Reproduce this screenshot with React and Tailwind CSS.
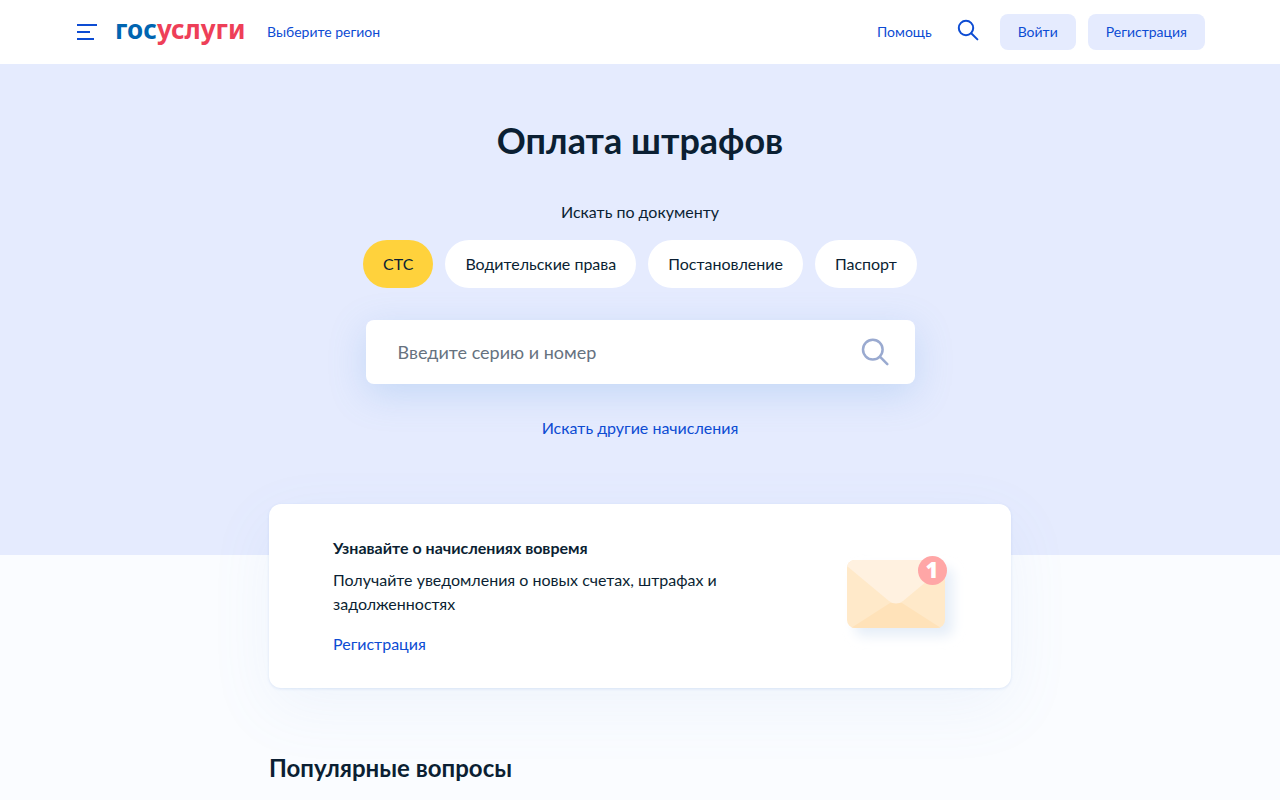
import React, { useState } from 'react'

const documents = [
  { id: 'sts', label: 'СТС' },
  { id: 'license', label: 'Водительские права' },
  { id: 'ruling', label: 'Постановление' },
  { id: 'passport', label: 'Паспорт' },
]

const MenuIcon = () => (
  <svg width="24" height="24" viewBox="0 0 24 24" aria-hidden="true">
    <path d="M2 5h20M2 12h13M2 19h17" stroke="#0d4cd3" strokeWidth="2" fill="none" />
  </svg>
)

const HeaderSearchIcon = () => (
  <svg width="24" height="28" viewBox="0 0 24 28" fill="none" aria-hidden="true">
    <circle cx="10" cy="10" r="7.2" stroke="#0d4cd3" strokeWidth="2" />
    <path d="M15.2 15.2l6.2 6.2" stroke="#0d4cd3" strokeWidth="2" strokeLinecap="round" />
  </svg>
)

const SearchIcon = () => (
  <svg width="28" height="28" viewBox="0 0 28 28" fill="none" aria-hidden="true">
    <circle cx="11.8" cy="11.6" r="9.8" stroke="#9aaad0" strokeWidth="2.5" />
    <path d="M18.9 18.7l7.4 7.4" stroke="#9aaad0" strokeWidth="2.5" strokeLinecap="round" />
  </svg>
)

const EnvelopeIcon = () => (
  <svg
    width="100"
    height="80"
    viewBox="0 0 100 80"
    className="shrink-0 overflow-visible"
    aria-hidden="true"
  >
    <defs>
      <clipPath id="envelope">
        <rect x="0" y="4" width="98" height="68" rx="8" />
      </clipPath>
      <filter id="envelope-shadow" x="-30%" y="-30%" width="160%" height="160%">
        <feGaussianBlur stdDeviation="6" />
      </filter>
    </defs>
    <rect x="8" y="12" width="98" height="68" rx="8" fill="#e6eef8" filter="url(#envelope-shadow)" />
    <g clipPath="url(#envelope)">
      <rect x="0" y="4" width="98" height="68" fill="#ffe9c9" />
      <path d="M4 72L43 47h12l39 25z" fill="#ffe2b9" />
      <path d="M0 4h98v6L56 45q-7 5-14 0L0 10z" fill="#fff1e0" />
    </g>
    <circle cx="85.500" cy="14.500" r="14.500" fill="#ffa6a6" />
    <text
      x="85"
      y="22"
      textAnchor="middle"
      fill="#fff"
      className="font-['Open_Sans'] text-[22px] font-extrabold"
    >
      1
    </text>
  </svg>
)

const Header = () => (
  <header className="bg-white">
    <div className="mx-auto flex h-16 max-w-[1130px] items-center justify-between text-sm text-[#0d4cd3]">
      <div className="flex items-center">
        <button type="button" aria-label="Меню">
          <MenuIcon />
        </button>
        <a
          href="#home"
          className="ml-4 w-32 pb-1.5 font-['Noto_Sans'] text-[26px] leading-8 font-bold text-[#0065b1]"
        >
          гос<span className="text-[#ee3f58]">услуги</span>
        </a>
        <a href="#region" className="ml-6">
          Выберите регион
        </a>
      </div>
      <div className="flex items-center">
        <a href="#help">Помощь</a>
        <button type="button" aria-label="Поиск" className="mr-5 ml-6">
          <HeaderSearchIcon />
        </button>
        <div className="flex gap-3">
          <button type="button" className="h-9 rounded-lg bg-[#e5ebfe] px-[18px]">
            Войти
          </button>
          <button type="button" className="h-9 rounded-lg bg-[#e5ebfe] px-[18px]">
            Регистрация
          </button>
        </div>
      </div>
    </div>
  </header>
)

const SearchSection = () => {
  const [active, setActive] = useState('sts')

  return (
    <section className="flex flex-col items-center bg-[#e5ebfe] pt-14 pb-[115px]">
      <h1 className="text-4xl leading-10 font-bold">Оплата штрафов</h1>
      <p className="mt-10">Искать по документу</p>
      <div className="mt-4 flex flex-wrap justify-center gap-3">
        {documents.map((doc) => (
          <button
            key={doc.id}
            type="button"
            aria-pressed={active === doc.id}
            onClick={() => setActive(doc.id)}
            className={
              active === doc.id
                ? 'h-12 rounded-full bg-[#ffd23c] px-5'
                : 'h-12 rounded-full bg-white px-5'
            }
          >
            {doc.label}
          </button>
        ))}
      </div>
      <form
        onSubmit={(e) => e.preventDefault()}
        className="mt-8 flex h-16 w-full max-w-[549px] items-center rounded-lg bg-white pr-[26px] pl-8 shadow-[0_10px_36px_rgba(100,160,225,0.25)]"
      >
        <input
          type="text"
          aria-label="Введите серию и номер"
          placeholder="Введите серию и номер"
          className="min-w-0 flex-1 text-lg outline-none placeholder:text-[#66727f]"
        />
        <button type="submit" aria-label="Найти">
          <SearchIcon />
        </button>
      </form>
      <a href="#other" className="mt-8 text-[#0d4cd3]">
        Искать другие начисления
      </a>
    </section>
  )
}

const NoticeCard = () => (
  <section className="-mt-[51px] flex items-center justify-between gap-16 rounded-xl bg-white px-16 py-8 shadow-[0_1px_3px_rgba(117,154,222,0.2),0_20px_64px_rgba(117,154,222,0.08)]">
    <div>
      <h2 className="font-bold">Узнавайте о начислениях вовремя</h2>
      <p className="mt-2">
        Получайте уведомления о новых счетах, штрафах и задолженностях
      </p>
      <a href="#register" className="mt-4 inline-block text-[#0d4cd3]">
        Регистрация
      </a>
    </div>
    <EnvelopeIcon />
  </section>
)

const App = () => (
  <div className="min-h-screen bg-[#fafcff] font-['Lato',sans-serif] text-base text-[#0b1f33]">
    <Header />
    <main>
      <SearchSection />
      <div className="mx-auto max-w-[742px]">
        <NoticeCard />
        <h2 className="mt-16 text-2xl font-bold">Популярные вопросы</h2>
      </div>
    </main>
  </div>
)

export default App
